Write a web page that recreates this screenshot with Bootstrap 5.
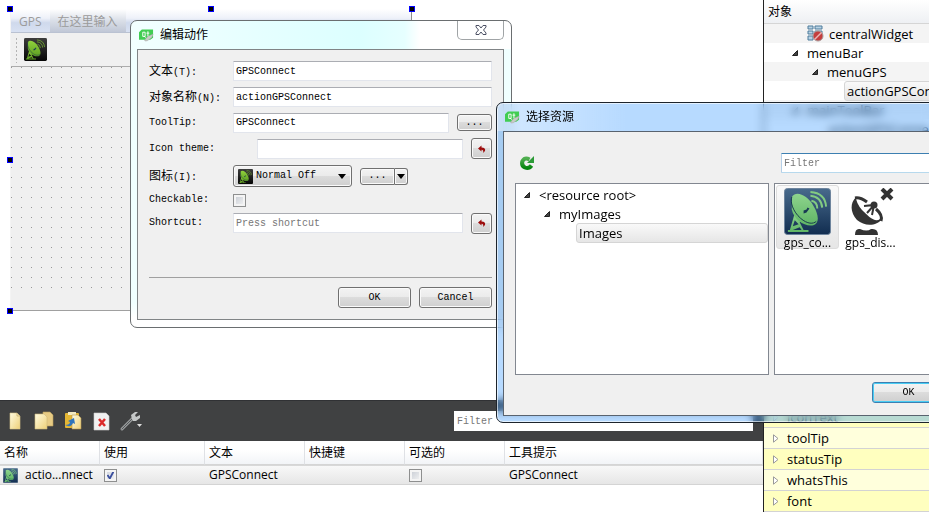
<!DOCTYPE html>
<html lang="zh-CN">
<head>
<meta charset="utf-8">
<meta name="viewport" content="width=device-width, initial-scale=1">
<title>Qt Designer</title>
<link href="https://cdn.jsdelivr.net/npm/bootstrap@5.3.0/dist/css/bootstrap.min.css" rel="stylesheet">
<style>
:root{--ui:"Open Sans","Noto Sans CJK SC",sans-serif;--mono:"Liberation Mono","Noto Sans CJK SC",monospace}
body{font-family:var(--ui);font-size:12px;line-height:18px;color:#000;background:#fff}
.desk{min-height:100vh;isolation:isolate}
.mono,.mono input,.mono select,.mono button{font-family:var(--mono);font-size:10px;line-height:14px}
.zh{font-family:"Noto Sans CJK SC",sans-serif;font-size:12px}
input::placeholder{color:#777}
svg{display:block;flex:none}

/* form being designed */
.form-win{width:402px;height:302px;margin:9px 0 0 10px;background:#f0f0f0;border-right:1px solid #8c8c8c;border-bottom:1px solid #a0a0a0;border-left:1px solid #f4f4f4}
.form-menu{height:24px;background:linear-gradient(#fff,#eef1f9 40%,#cfd9ec 60%,#d8e1f2);border-bottom:1px solid #bac2d2;color:#9b9b9b}
.form-menu a{color:inherit;text-decoration:none;padding:4px 8px 0}
.form-menu a+a{background:linear-gradient(#fff,#dadfe8 50%,#c0c7d6)}
.form-tools{height:34px;border-bottom:1px solid #acacac;padding-left:4px;gap:6px}
.grip{width:3px;height:26px;background:radial-gradient(circle,#b4b4b4 1px,transparent 1px) 0 0/3px 4px}
.form-body{background:conic-gradient(from 270deg at 1px 1px,#989898 90deg,transparent 0) 0 0/10px 10px;margin-bottom:22px}
.knob{width:6px;height:6px;background:#000;border:1px solid #00f}
.k1{left:7px;top:6px}.k2{left:208px;top:6px}.k3{left:409px;top:6px}.k4{left:7px;top:157px}.k5{left:7px;top:308px}

/* action editor */
.act-bar{height:41px;background:#404142;border-top:1px solid #303134;padding:0 10px 0 8px}
.act-bar .find{width:299px;height:20px;border:0;padding:0 3px}
.act-table{height:71px;background:#fff}
.act-table table{table-layout:fixed;border-collapse:separate;border-spacing:0}
.act-table th{font-weight:400;height:24px;padding:0 4px;border-right:1px solid #dfe1e5;border-bottom:1px solid #d5d5d5;background:linear-gradient(#fff 40%,#f2f4f7)}
.act-table td{height:20px;padding:0 4px;border-top:1px solid #d8d8d8;border-bottom:1px solid #d4d4d4;background:linear-gradient(#f8f8f8,#e6e6e6)}
.act-table td:first-child{padding-left:3px}
.act-name{gap:7px}
.tick{appearance:none;width:13px;height:13px;margin:0;border:1px solid #8e8f8f;background:linear-gradient(135deg,#c4c9d1,#f6f6f6);box-shadow:inset 0 0 0 2px #f4f4f4;display:block}
.tick:checked{background:url("data:image/svg+xml,%3Csvg xmlns='http://www.w3.org/2000/svg' viewBox='0 0 11 11'%3E%3Cpath d='M2.5 5l2.300 3.500L8.500 1.500' fill='none' stroke='%233b4f9e' stroke-width='1.800'/%3E%3C/svg%3E") center/11px,linear-gradient(135deg,#cdd2dc,#f6f6f6)}

/* docks at the right */
.docks{width:166px;border-left:1px solid #222}
.tree-head{height:24px;padding-left:4px;background:linear-gradient(#fff,#eef0f3);border-bottom:1px solid #d5d5d5}
.tree-row{height:19px;white-space:nowrap;font-size:13px}
.tree-row:nth-child(odd){background:#f4f4f4}
.tree-row .arrow,.res .arrow{margin-right:9px}
.d1{padding-left:28px}.d2{padding-left:48px}.d3{padding-left:80px}.dw{padding-left:43px}
.picked{height:20px;padding:0 2px;border:1px solid #d5d5d5;border-radius:3px;background:linear-gradient(#f9f9f9,#e6e6e6)}
.prop{height:21px;padding-left:9px;gap:8px;border-bottom:1px solid #d3d3d3;background:#ffffdc;font-size:13px}
.prop:nth-child(odd){background:#ffffbf}

/* dialogs */
.dlg{border-radius:7px}
.dlg-edit{left:130px;top:20px;width:382px;padding:0 7px 7px 6px;border:1px solid #6a6e70;background:linear-gradient(90deg,#f2ffff,#dcffff 60%,#e6ffff 72%,#fff 76%) 0 0/100% 28px no-repeat,linear-gradient(#f0ffff 92%,#fff 97%)}
.dlg-title{height:28px;gap:6px;padding-left:2px}
.close-x{width:47px;height:19px;border:1px solid #a0a4a6;border-top:0;border-radius:0 0 5px 5px;background:#fff;padding:0}
.client{background:#f0f0f0;border:1px solid #808486}
.dlg-edit .client{padding:11px}
.rows{display:grid;grid-template-columns:84px 1fr;grid-template-rows:20px 20px 19px 21px 22px 14px 20px;row-gap:6px;align-items:center}
.rows label{margin:0;white-space:nowrap}
.box{height:20px;min-width:0;border:1px solid #e2e5ec;border-top-color:#abadb3;border-radius:1px;padding:0 2px;background:#fff;color:#000}
.push{border:1px solid #707070;border-radius:3px;background:linear-gradient(#f3f3f3,#ebebeb 49%,#dcdcdc 50%,#cfcfcf);color:#000;padding:0;box-shadow:inset 0 0 0 1px #fafafa}
.w73{width:73px;height:21px}
.w35{width:35px;height:17px}
.w21{width:21px;height:21px}
.pick{width:119px;height:22px;padding:0 5px 0 4px;gap:3px}
.pick select{appearance:none;border:0;background:none;padding:0;min-width:0;color:#000}
.rule{border-top:1px solid #a0a0a0;margin:44px 0 9px}

.dlg-res{left:496px;top:102px;right:-36px;padding:0 7px 6px 6px;border:1px solid #1d242c;background:linear-gradient(90deg,rgba(255,255,255,.4),transparent 130px) 0 0/100% 28px no-repeat,rgba(18,132,255,.3);-webkit-backdrop-filter:blur(4px);backdrop-filter:blur(4px);box-shadow:inset 0 0 0 1px rgba(255,255,255,.6)}
.dlg-res .client{padding:21px 11px 12px;border-color:#59636f}
.dlg-res .find{width:164px;border-color:#3c7fb1 #b5cfe7 #b7d9ed;height:20px}
.res-bar{margin-bottom:10px}
.panes{gap:5px;margin-bottom:7px}
.pane{height:192px;border:1px solid #828790;background:#fff}
.view{padding:1px}
.res{width:254px;font-size:13px;padding-top:1px}
.res div{height:19px}
.res .leaf{padding-left:60px}
.thumb{width:63px;height:64px;padding:2px 1px 0;border:1px solid transparent;line-height:16px;font-size:12px;flex:none}
.thumb.on{border-color:#ddd;border-radius:3px;background:linear-gradient(#f9f9f9,#e6e6e6)}
.push.go{border-color:#3c7fb1;box-shadow:inset 0 0 0 1px #48cdf4}
</style>
<script src="https://cdn.jsdelivr.net/npm/bootstrap@5.3.0/dist/js/bootstrap.bundle.min.js"></script>
</head>
<body>
<svg width="0" height="0" class="position-absolute" aria-hidden="true">
<defs>
<linearGradient id="gNavy" x2="0" y2="1"><stop stop-color="#486a8c"/><stop offset="1" stop-color="#112d50"/></linearGradient>
<linearGradient id="gLeaf" x2="0" y2="1"><stop stop-color="#8ed48d"/><stop offset="1" stop-color="#5fb565"/></linearGradient>
<linearGradient id="gBlack" x2="0" y2="1"><stop stop-color="#3d3d3d"/><stop offset="1" stop-color="#050505"/></linearGradient>
<linearGradient id="gLime" x2="0" y2="1"><stop stop-color="#8fd13c"/><stop offset="1" stop-color="#5f9f22"/></linearGradient>
<linearGradient id="gPaper" x2="1" y2="1"><stop stop-color="#fffbe0"/><stop offset="1" stop-color="#eed078"/></linearGradient>
<linearGradient id="gGreen" x2="0" y2="1"><stop stop-color="#4fae4f"/><stop offset="1" stop-color="#06860f"/></linearGradient>
<g id="dish"><path d="M10 29L6 43H4V45H25V43H20L16 35L17 33L11 26zM11 33l4 4-6 2zm-2 10l7-3 2 3z"/><path d="M8 9C13 2 24 8 30 18C36 28 36 36 30 38C22 40 10 33 8 22z"/><path d="M8 9C6 14 9 24 17 31C24 37 30 37 33 34" fill="none" stroke="#16384f" stroke-width="1"/><path d="M20 23l3-1 1-2 2 1-3 4-3 1z" fill="#193a53"/><path d="M28 13q6 1 6 8M27 8q11 1 12 12M27 4q15 1 16 15" fill="none" stroke="currentColor" stroke-width="2"/></g>
<symbol id="dishNavy" viewBox="0 0 48 48"><rect x=".5" y=".5" width="47" height="47" rx="3" fill="url(#gNavy)" stroke="#6d839c"/><g fill="url(#gLeaf)" color="#82cb82"><use href="#dish"/></g></symbol>
<symbol id="dishBlack" viewBox="0 0 48 48"><rect width="48" height="48" rx="3" fill="url(#gBlack)"/><g fill="url(#gLime)" color="#699a31"><use href="#dish"/></g></symbol>
<symbol id="qt" viewBox="0 0 16 14"><path d="M3 1H15V10L12 12H0V4z" fill="#41cd52"/><path d="M4 4h2.500v4.500H4zM5.500 8l1.500 1.800M9.500 3v5.500h1.500M8 5h3" fill="none" stroke="#fff" stroke-width="1"/><path d="M6 13Q7 9 15 6Q15 10 9 13Q7 14 6 13z" fill="#c8cbc7" stroke="#999" stroke-width=".4"/></symbol>
<symbol id="tri" viewBox="0 0 6 6"><path d="M5.500 .5V5.500H.5z" fill="#444" stroke="#222"/></symbol>
<symbol id="triOpen" viewBox="0 0 6 9"><path d="M.5 .8V8.200L5 4.500z" fill="#fff" stroke="#999"/></symbol>
<symbol id="undo" viewBox="0 0 8 8"><path d="M0 3.500L3.500 .5V2.500Q8 2.500 7 6L5 8Q6 5 3.500 4.800V6.500z" fill="#9c0d0d"/></symbol>
<symbol id="down" viewBox="0 0 8 5"><path d="M0 0H8L4 5z"/></symbol>
</defs></svg>

<div class="desk d-flex position-relative overflow-hidden">
  <main class="d-flex flex-column flex-grow-1">
    <div class="flex-grow-1 position-relative">
      <section class="form-win d-flex flex-column">
        <nav class="form-menu d-flex align-items-stretch"><a href="#">GPS</a><a href="#">在这里输入</a></nav>
        <div class="form-tools d-flex align-items-center">
          <span class="grip"></span>
          <svg width="23" height="23"><use href="#dishBlack"/></svg>
        </div>
        <div class="form-body flex-grow-1"></div>
      </section>
      <span class="knob k1 position-absolute"></span><span class="knob k2 position-absolute"></span><span class="knob k3 position-absolute"></span><span class="knob k4 position-absolute"></span><span class="knob k5 position-absolute"></span>
    </div>

    <section>
      <div class="act-bar mono d-flex align-items-center">
        <svg width="140" height="24" viewBox="0 0 140 24">
          <path d="M2 4h7l3 3v13H2z" fill="url(#gPaper)" stroke="#d8c68c" stroke-width=".6"/><path d="M9 4v3h3" fill="none" stroke="#baa05c" stroke-width=".6"/>
          <path d="M35 3h7l3 3v11H35z" fill="#e7cb84" stroke="#baa05c" stroke-width=".6"/><path d="M27 5h9l3 3v12H27z" fill="url(#gPaper)" stroke="#cdb87a" stroke-width=".6"/>
          <rect x="57" y="4" width="14" height="15" rx="1" fill="#e4b634"/><rect x="60" y="3" width="8" height="3" fill="#f4eac0"/><path d="M64 6h6l3 3v11h-9z" fill="url(#gPaper)" stroke="#b1964d" stroke-width=".6"/><path d="M57 16q5 0 5-3l-2-1 6-3 1 6-2-1q-2 5-8 2z" fill="#2e74bd"/>
          <path d="M86 4h12l3 3v14H86z" fill="#f1f1f1" stroke="#ccc" stroke-width=".6"/><path d="M91 10l6 7m0-7l-6 7" stroke="#dc2a2a" stroke-width="2.500"/>
          <path d="M114 20L125 9" stroke="#999c9d" stroke-width="3" stroke-linecap="round"/><path d="M114 20L125 9" stroke="#55585a" stroke-width="1" stroke-linecap="round"/><path d="M124 10L123 6L127 3H130L127 6L128 8L132 6V9L128 12H125z" fill="#c5c8c8"/>
          <path d="M129 15h5l-2.500 3z" fill="#ddd"/>
        </svg>
        <input class="find ms-auto" type="text" placeholder="Filter" aria-label="Filter actions">
      </div>
      <div class="act-table">
        <table class="w-100">
          <colgroup><col width="100"><col width="105"><col width="100"><col width="100"><col width="100"><col></colgroup>
          <thead><tr><th>名称</th><th>使用</th><th>文本</th><th>快捷键</th><th>可选的</th><th>工具提示</th></tr></thead>
          <tbody><tr>
            <td><span class="act-name d-flex align-items-center text-nowrap"><svg width="15" height="15"><use href="#dishNavy"/></svg>actio...nnect</span></td>
            <td><input class="tick" type="checkbox" checked aria-label="使用"></td>
            <td>GPSConnect</td><td></td>
            <td><input class="tick" type="checkbox" aria-label="可选的"></td>
            <td>GPSConnect</td>
          </tr></tbody>
        </table>
      </div>
    </section>
  </main>

  <aside class="docks d-flex flex-column flex-shrink-0 overflow-hidden">
    <div class="tree-head d-flex align-items-center">对象</div>
    <div>
      <div class="tree-row d-flex align-items-center dw">
        <svg class="me-1" width="18" height="17" viewBox="0 0 18 17"><path d="M1 1h5v3H1zM8 1h7v3H8zM1 6h5v3H1zM8 6h7v3H8zM1 11h5v4H1z" fill="#b8d2e4" stroke="#4f7d9c"/><circle cx="11" cy="11" r="5" fill="#c43d3d" stroke="#a99"/><path d="M7.500 14.500L14.500 7.500" stroke="#e9b5b5" stroke-width="1.500"/></svg>centralWidget</div>
      <div class="tree-row d-flex align-items-center d1"><svg class="arrow" width="6" height="6"><use href="#tri"/></svg>menuBar</div>
      <div class="tree-row d-flex align-items-center d2"><svg class="arrow" width="6" height="6"><use href="#tri"/></svg>menuGPS</div>
      <div class="tree-row d-flex align-items-center d3"><span class="picked">actionGPSConnect</span></div>
      <div class="tree-row d-flex align-items-center d1"><svg class="arrow" width="6" height="6"><use href="#tri"/></svg>mainToolBar</div>
      <div class="tree-row d-flex align-items-center ps-5"><span class="ms-3">actionGPSConnect</span></div>
    </div>
    <div class="mt-auto">
      <div class="prop d-flex align-items-center"><svg width="6" height="9"><use href="#triOpen"/></svg>iconText</div>
      <div class="prop d-flex align-items-center"><svg width="6" height="9"><use href="#triOpen"/></svg>toolTip</div>
      <div class="prop d-flex align-items-center"><svg width="6" height="9"><use href="#triOpen"/></svg>statusTip</div>
      <div class="prop d-flex align-items-center"><svg width="6" height="9"><use href="#triOpen"/></svg>whatsThis</div>
      <div class="prop d-flex align-items-center"><svg width="6" height="9"><use href="#triOpen"/></svg>font</div>
    </div>
  </aside>

  <section class="dlg dlg-edit position-absolute" role="dialog" aria-label="编辑动作">
    <header class="dlg-title d-flex align-items-center">
      <svg width="15" height="14"><use href="#qt"/></svg><span>编辑动作</span>
      <button class="close-x ms-auto align-self-start d-flex align-items-center justify-content-center" type="button" aria-label="Close"><svg width="12" height="10" viewBox="0 0 12 10"><path d="M1 .5H4L6 3L8 .5H11V2L8.500 5L11 8V9.500H8L6 7L4 9.500H1V8L3.500 5L1 2z" fill="#fff" stroke="#4c5164"/></svg></button>
    </header>
    <form class="client mono" onsubmit="return false">
      <div class="rows">
        <label for="fText"><span class="zh">文本</span>(T):</label><input id="fText" class="box" type="text" value="GPSConnect">
        <label for="fName"><span class="zh">对象名称</span>(N):</label><input id="fName" class="box" type="text" value="actionGPSConnect">
        <label for="fTip">ToolTip:</label><div class="d-flex align-items-center"><input id="fTip" class="box flex-grow-1 me-2" type="text" value="GPSConnect"><button class="push w35" type="button">...</button></div>
        <label for="fTheme">Icon theme:</label><div class="d-flex align-items-center ps-4"><input id="fTheme" class="box flex-grow-1 me-2" type="text"><button class="push w21 d-flex align-items-center justify-content-center" type="button" aria-label="Reset theme"><svg width="8" height="8"><use href="#undo"/></svg></button></div>
        <label for="fIcon"><span class="zh">图标</span>(I):</label><div class="d-flex align-items-center gap-2">
          <div class="push pick d-flex align-items-center"><svg width="15" height="15"><use href="#dishBlack"/></svg><select id="fIcon" class="flex-grow-1"><option>Normal Off</option></select><svg width="8" height="5"><use href="#down"/></svg></div>
          <div class="btn-group"><button class="push w35 rounded-end-0" type="button">...</button><button class="push rounded-start-0 border-start-0 px-0 d-flex align-items-center" type="button" aria-label="More"><svg class="mx-auto" width="12" height="5"><use href="#down"/></svg></button></div></div>
        <label for="fCheck">Checkable:</label><input id="fCheck" class="tick" type="checkbox">
        <label for="fKey">Shortcut:</label><div class="d-flex align-items-center"><input id="fKey" class="box flex-grow-1 me-2" type="text" placeholder="Press shortcut"><button class="push w21 d-flex align-items-center justify-content-center" type="button" aria-label="Reset shortcut"><svg width="8" height="8"><use href="#undo"/></svg></button></div>
      </div>
      <div class="rule"></div>
      <div class="d-flex justify-content-end gap-2"><button class="push w73" type="button">OK</button><button class="push w73" type="button">Cancel</button></div>
    </form>
  </section>

  <section class="dlg dlg-res position-absolute" role="dialog" aria-label="选择资源">
    <header class="dlg-title d-flex align-items-center"><svg width="15" height="14"><use href="#qt"/></svg><span>选择资源</span></header>
    <div class="client">
      <div class="res-bar d-flex align-items-center mono">
        <button class="btn p-0 border-0 ms-1" type="button" aria-label="Reload"><svg width="16" height="16" viewBox="0 0 16 16"><path d="M12.500 10.500Q10 14 6 12.500Q2 10.500 3.500 6Q6 2 10.500 4.500" fill="none" stroke="url(#gGreen)" stroke-width="4"/><path d="M15 1V8H8z" fill="#2d9b38"/></svg></button>
        <input class="box find ms-auto" type="text" placeholder="Filter" aria-label="Filter resources">
      </div>
      <div class="d-flex panes">
        <div class="pane res flex-shrink-0">
          <div class="d-flex align-items-center ps-2"><svg class="arrow" width="6" height="6"><use href="#tri"/></svg>&lt;resource root&gt;</div>
          <div class="d-flex align-items-center ps-4"><svg class="arrow ms-1" width="6" height="6"><use href="#tri"/></svg>myImages</div>
          <div class="leaf d-flex align-items-center"><span class="picked flex-grow-1">Images</span></div>
        </div>
        <div class="pane view flex-grow-1 d-flex">
          <div class="thumb on text-center"><svg class="mx-auto" width="47" height="47"><use href="#dishNavy"/></svg><span>gps_co...</span></div>
          <div class="thumb text-center"><svg class="mx-auto" width="47" height="47" viewBox="0 0 47 47"><path d="M9 9C3 15 3 24 10 32C18 39 30 38 35 31Q36 28 33 31C28 35 21 28 15 22Q9 15 9 9z" fill="#333"/><path d="M8 10Q13 9 20 14M29 21Q36 27 34 33" fill="none" stroke="#333" stroke-width="3"/><path d="M17 18L27 17L25 27M20 25L28 16" fill="none" stroke="#333" stroke-width="2"/><circle cx="27" cy="17" r="3.500" fill="#333"/><path d="M8 47Q8 40 13 41Q20 44 24 41Q31 40 31 47z" fill="#333"/><path d="M35 1L45 11M45 1L35 11" stroke="#333" stroke-width="4"/></svg><span>gps_dis...</span></div>
        </div>
      </div>
      <div class="d-flex justify-content-end mono"><button class="push go w73" type="button">OK</button></div>
    </div>
  </section>
</div>
</body>
</html>
